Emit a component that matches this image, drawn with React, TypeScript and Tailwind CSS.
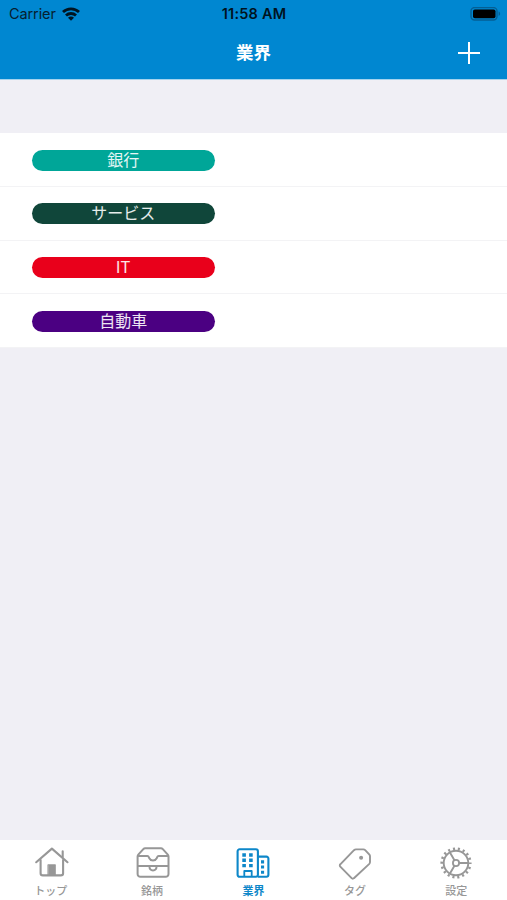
import type { ReactNode } from 'react';

interface Industry {
  name: string;
  color: string;
}

interface Tab {
  label: string;
  icon: ReactNode;
  active?: boolean;
}

const industries: Industry[] = [
  { name: '銀行', color: 'bg-[#00a698]' },
  { name: 'サービス', color: 'bg-[#10463a]' },
  { name: 'IT', color: 'bg-[#e9001b]' },
  { name: '自動車', color: 'bg-[#4b0082]' },
];

const HomeIcon = () => (
  <svg width="36" height="36" viewBox="0 0 36 36" fill="none" stroke="currentColor" strokeWidth="2.1" strokeLinecap="round" strokeLinejoin="round">
    <path d="M3.2 17.2 18.9 3.6l15.6 13.6" />
    <path d="M7.6 15v13.2a2.2 2.2 0 0 0 2.2 2.2h18.1a2.2 2.2 0 0 0 2.2-2.2V15M29.7 12V6.2" />
    <path d="M15.2 19.7h7.2v10.7h-7.2z" fill="currentColor" strokeWidth="0.8" />
  </svg>
);

const TrayIcon = () => (
  <svg width="36" height="36" viewBox="0 0 36 36" fill="none" stroke="currentColor" strokeWidth="2" strokeLinejoin="round">
    <path d="M3.6 11.5c0-.8.2-1.2.7-1.8l5-5.6a2.5 2.5 0 0 1 1.9-.8h15.7a2.5 2.5 0 0 1 1.9.8l5 5.6c.5.6.7 1 .7 1.8V29a2.8 2.8 0 0 1-2.8 2.8H6.4A2.8 2.8 0 0 1 3.6 29z" />
    <path d="M3.6 11h9.8c1.3 0 1.3 1.1 1.9 2.3.7 1.4 2 2.3 3.7 2.3s3-.9 3.7-2.3c.6-1.2.6-2.3 1.9-2.3h9.9" />
    <path d="M3.6 20.9h31M15.4 21.2c.1 2.6 1.6 4.2 3.6 4.2s3.5-1.6 3.6-4.2" />
  </svg>
);

const BuildingIcon = () => (
  <svg width="36" height="36" viewBox="0 0 36 36" fill="none" stroke="currentColor" strokeWidth="2.1" strokeLinejoin="round">
    <rect x="2.6" y="4.3" width="20.3" height="27.5" rx="2" />
    <path d="M22.9 11.6h8.5a2 2 0 0 1 2 2v16.2a2 2 0 0 1-2 2h-8.5" />
    <path d="M9.3 31.8V26h7.4v5.8" strokeWidth="1.8" />
    <g fill="currentColor" stroke="none">
      <path d="M7.3 8.3h3.6v3.4H7.3zM14.1 8.3h3.6v3.4h-3.6z" />
      <path d="M7.3 13.6h3.6V17H7.3zM14.1 13.6h3.6V17h-3.6z" />
      <path d="M7.3 18.9h3.6v3.4H7.3zM14.1 18.9h3.6v3.4h-3.6z" />
      <path d="M26 15.3h3.1v3.1H26zM26 20.5h3.1v3.1H26zM26 25.7h3.1v3.1H26z" />
    </g>
  </svg>
);

const TagIcon = () => (
  <svg width="36" height="36" viewBox="0 0 36 36" fill="none" stroke="currentColor" strokeWidth="1.9" strokeLinejoin="round">
    <path d="M3.3 19.3 17 5.2a2.9 2.9 0 0 1 2-.8h7.4c.7 0 1.3.3 1.8.8l4.2 4.5c.4.5.6 1 .6 1.6v5.8c0 .7-.2 1.3-.7 1.8L16.9 33.2a1.6 1.6 0 0 1-2.3 0L3.3 21.6a1.6 1.6 0 0 1 0-2.3z" />
    <circle cx="24.1" cy="12.7" r="2" fill="currentColor" stroke="none" />
  </svg>
);

const GearIcon = () => (
  <svg width="36" height="36" viewBox="0 0 36 36" fill="none" stroke="currentColor" strokeWidth="1.9">
    <circle cx="18" cy="18" r="12.3" />
    <circle cx="18" cy="18" r="14.3" strokeWidth="2.6" strokeDasharray="2.1 2.892" strokeDashoffset="1.05" />
    <circle cx="18" cy="18" r="3.1" strokeWidth="1.8" />
    <path d="M21.1 18h9.4M16.45 15.32 11.8 7.3M16.45 20.68 11.8 28.7" />
  </svg>
);

const tabs: Tab[] = [
  { label: 'トップ', icon: <HomeIcon /> },
  { label: '銘柄', icon: <TrayIcon /> },
  { label: '業界', icon: <BuildingIcon />, active: true },
  { label: 'タグ', icon: <TagIcon /> },
  { label: '設定', icon: <GearIcon /> },
];

function StatusBar() {
  return (
    <div className="grid h-[27px] grid-cols-3 items-center pr-[6px] pl-[9px] text-[#06202f]">
      <div className="flex items-center gap-[6px] text-[14.5px] tracking-[-0.1px]">
        <span>Carrier</span>
        <svg width="18" height="14" viewBox="0 0 18 14" fill="none" stroke="#001522" strokeWidth="2.8">
          <path d="M1 5.1a11.5 11.5 0 0 1 16 0" />
          <path d="M4 8.5a7.2 7.2 0 0 1 10 0" />
          <path d="M9 13.8 6 10.8a4.2 4.2 0 0 1 6 0z" fill="#001522" stroke="none" />
        </svg>
      </div>
      <div className="-ml-[2px] text-center text-[14.5px] font-semibold tracking-[0.2px] whitespace-nowrap text-[#00131f]">11:58 AM</div>
      <svg className="justify-self-end" width="31" height="14" viewBox="0 0 31 14">
        <rect x="1" y=".6" width="26" height="12.4" rx="3.5" fill="none" stroke="#045f94" strokeWidth="1.4" />
        <rect x="3" y="2.5" width="22.5" height="8.8" rx="1.8" fill="#000" />
        <path d="M28.6 4.6c2 .7 2 3.7 0 4.4z" fill="#045f94" />
      </svg>
    </div>
  );
}

export default function App() {
  return (
    <div className="flex h-[900px] w-[507px] flex-col overflow-hidden bg-[#f0eff5] font-['Inter','Noto_Sans_CJK_JP',sans-serif]">
      <header className="h-[80px] shrink-0 border-b border-[#a5d3ee] bg-[#0087d1]">
        <StatusBar />
        <div className="grid h-[52px] grid-cols-3 items-center text-white">
          <h1 className="col-start-2 text-center text-[17.5px] leading-[52px] font-bold">業界</h1>
          <button className="mr-[27px] justify-self-end" aria-label="追加">
            <svg width="22" height="22" viewBox="0 0 22 22" stroke="currentColor" strokeWidth="2">
              <path d="M11 0v22M0 11h22" />
            </svg>
          </button>
        </div>
      </header>

      <main className="flex-1 pt-[53.4px]">
        <ul className="bg-white">
          {industries.map((item) => (
            <li key={item.name} className="flex h-[53.7px] items-center border-b border-[#f3f3f5] pt-px pl-[32px]">
              <span className={`flex h-[21px] w-[182.6px] items-center justify-center rounded-full text-[16px] leading-[21px] text-white/90 ${item.color}`}>
                {item.name}
              </span>
            </li>
          ))}
        </ul>
      </main>

      <nav className="grid h-[60px] shrink-0 grid-cols-5 bg-white">
        {tabs.map((tab) => (
          <div key={tab.label} className={`flex flex-col items-center pt-[5px] ${tab.active ? 'text-[#0d87c9]' : 'text-[#979797]'}`}>
            {tab.icon}
            <span className={`mt-[2px] text-[11px] leading-[16px] ${tab.active ? 'font-bold' : 'font-medium'}`}>{tab.label}</span>
          </div>
        ))}
      </nav>
    </div>
  );
}
